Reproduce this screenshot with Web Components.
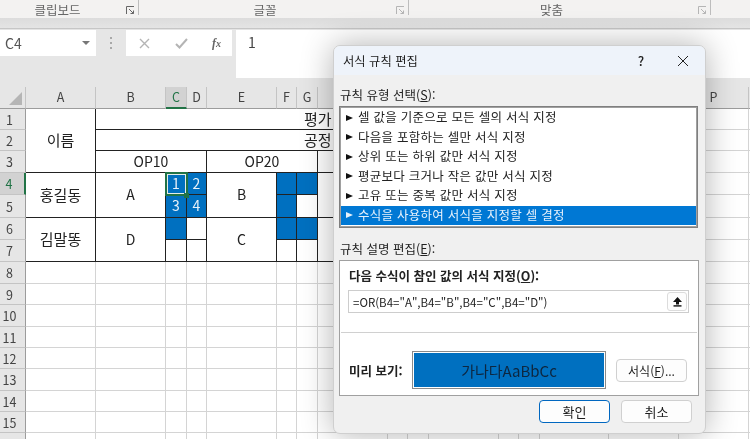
<!DOCTYPE html>
<html lang="ko">
<head>
<meta charset="utf-8">
<title>서식 규칙 편집</title>
<style>
    html, body {
        margin: 0;
        padding: 0;
        width: 750px;
        height: 439px;
        overflow: hidden;
        background: #fff;
        font-family: "Noto Sans CJK KR", "Noto Sans", sans-serif;
    }
</style>
</head>
<body>
<excel-app></excel-app>

<script>
const FONT = `"Noto Sans CJK KR", "Noto Sans", sans-serif`

class RibbonBar extends HTMLElement {
    constructor() {
        super()
        this.shadowDOM = this.attachShadow({mode: "open"})
    }

    connectedCallback() {
        const launcher = `<svg width="9" height="9" viewBox="0 0 9 9" fill="none" stroke="currentColor"><path d="M.5 8V.5H8"/><path d="M3 3l4.5 4.5M7.5 4.5v3h-3"/></svg>`
        const group = (width, shift, label, color) => `
            <div class="group" style="width:${width}px;padding-right:${shift}px;color:${color}">
                <span>${label}</span>${launcher}
            </div>`
        this.shadowDOM.innerHTML = `
            <style>
                :host {
                    display: block;
                    height: 30px;
                    background: #e4e4e4;
                    font-family: ${FONT};
                }
                .groups {
                    display: flex;
                    height: 18px;
                    background: #f3f2f1;
                    box-shadow: 0 1px 2px rgba(0,0,0,.12);
                }
                .group {
                    position: relative;
                    display: flex;
                    align-items: center;
                    justify-content: center;
                    box-sizing: border-box;
                    height: 15px;
                    border-right: 1px solid #bdbdbd;
                }
                .group span {
                    font-size: 12.5px;
                    line-height: 18px;
                    color: #666;
                    transform: translateY(2px);
                }
                .group svg {
                    position: absolute;
                    right: 3px;
                    top: 6px;
                }
                .strip {
                    height: 11px;
                    box-sizing: border-box;
                    border-bottom: 1px solid #c6c6c6;
                    background: linear-gradient(#dcdcdc, #e4e4e4);
                }
            </style>
            <div class="groups">
                ${group(139, 23, "클립보드", "#666")}
                ${group(270, 17, "글꼴", "#b5b5b5")}
                ${group(302, 16, "맞춤", "#b5b5b5")}
            </div>
            <div class="strip"></div>
        `
    }
}

class FormulaBar extends HTMLElement {
    constructor() {
        super()
        this.shadowDOM = this.attachShadow({mode: "open"})
    }

    connectedCallback() {
        this.shadowDOM.innerHTML = `
            <style>
                :host {
                    display: flex;
                    height: 57px;
                    background: #e6e6e6;
                    font-family: ${FONT};
                    color: #555;
                }
                .name {
                    display: flex;
                    align-items: center;
                    justify-content: space-between;
                    box-sizing: border-box;
                    width: 96px;
                    height: 26px;
                    padding: 0 5px;
                    background: #fff;
                    font-size: 14px;
                }
                .name i {
                    border: 4px solid transparent;
                    border-top: 4px solid #777;
                    border-bottom: 0;
                    margin-right: 1px;
                }
                .grip {
                    width: 30px;
                    display: flex;
                    height: 26px;
                    align-items: center;
                    justify-content: center;
                }
                .tools {
                    display: flex;
                    align-items: center;
                    justify-content: space-between;
                    box-sizing: border-box;
                    width: 106px;
                    height: 26px;
                    padding: 0 11px 0 13px;
                    background: #fff;
                    color: #b4b4b4;
                }
                .tools em {
                    font: italic bold 12px "Liberation Serif", serif;
                    color: #666;
                }
                .input {
                    flex: 1;
                    height: 48px;
                    margin-left: 4px;
                    padding: 2px 0 0 12px;
                    box-sizing: border-box;
                    background: #fff;
                    font-size: 14px;
                    line-height: 20px;
                    color: #444;
                }
            </style>
            <div class="name"><span>C4</span><i></i></div>
            <div class="grip">
                <svg width="3" height="12" fill="#a8a8a8"><rect y="0" width="2" height="2"/><rect y="5" width="2" height="2"/><rect y="10" width="2" height="2"/></svg>
            </div>
            <div class="tools">
                <svg width="11" height="11" fill="none" stroke="#b4b4b4" stroke-width="1.4"><path d="M1 1l9 9M10 1l-9 9"/></svg>
                <svg width="13" height="11" fill="none" stroke="#b4b4b4" stroke-width="2"><path d="M1 6l3.5 3.5L12 1"/></svg>
                <em>f<small>x</small></em>
            </div>
            <div class="input">1</div>
        `
    }
}

class SheetGrid extends HTMLElement {
    constructor() {
        super()
        this.shadowDOM = this.attachShadow({mode: "open"})
    }

    connectedCallback() {
        const widths = [26, 70, 70, 21, 20, 70, 20, 21, 70, 20, 21, 70, 20, 21, 69, 70, 70, 10]
        // H to O lie under the dialog, their letters are never seen
        const letters = ["A", "B", "C", "D", "E", "F", "G", "", "", "", "", "", "", "", "", "P", ""]
        const heights = [21, 21, 22, 22, 23, 22, 22, 22, 21, 22, 21, 21, 22, 21, 21, 21]
        const rowCount = heights.length
        const colCount = widths.length - 1
        const covered = new Set()
        const cells = []

        // c, r are 1 based sheet coordinates, header row and column come before them
        const cell = (c, r, cs, rs, cls, text, style) => {
            for (let y = r; y < r + rs; y++) {
                for (let x = c; x < c + cs; x++) covered.add(x + ":" + y)
            }
            cells.push(`<div class="cell ${cls}" style="grid-column:${c + 1} / span ${cs};grid-row:${r + 1} / span ${rs};${style || ""}">${text || ""}</div>`)
        }

        cell(1, 1, 1, 3, "b k", "이름")
        cell(2, 1, 13, 1, "bb far k", `<span>평가</span>`)
        cell(2, 2, 13, 1, "bb far k", `<span>공정</span>`)
        cell(2, 3, 3, 1, "b", "OP10")
        cell(5, 3, 3, 1, "b", "OP20")
        cell(1, 4, 1, 2, "b k", "홍길동")
        cell(2, 4, 1, 2, "b", "A")
        cell(1, 6, 1, 2, "b k", "김말똥")
        cell(2, 6, 1, 2, "b", "D")
        cell(3, 4, 1, 1, "b fill active", "1")
        cell(4, 4, 1, 1, "b fill", "2")
        cell(3, 5, 1, 1, "b fill", "3")
        cell(4, 5, 1, 1, "b fill", "4")
        cell(3, 6, 1, 1, "b fill")
        cell(4, 6, 1, 1, "b")
        cell(3, 7, 1, 1, "b")
        cell(4, 7, 1, 1, "b")
        cell(5, 4, 1, 2, "b", "B")
        cell(5, 6, 1, 2, "b", "C")
        cell(6, 4, 1, 1, "b fill")
        cell(7, 4, 1, 1, "b fill")
        cell(6, 5, 1, 1, "b fill")
        cell(7, 5, 1, 1, "b")
        cell(6, 6, 1, 1, "b fill")
        cell(7, 6, 1, 1, "b fill")
        cell(6, 7, 1, 1, "b")
        cell(7, 7, 1, 1, "b")

        // columns under the dialog carry the table on, O and P are plain sheet again
        for (let r = 1; r <= 7; r++) {
            for (let c = 8; c <= colCount; c++) {
                if (covered.has(c + ":" + r)) continue
                if (c > 14) cell(c, r, 1, 1, "")
                else cell(c, r, 1, 1, r % 2 ? "bb" : "nb")
            }
        }
        for (let r = 8; r <= rowCount; r++) {
            for (let c = 1; c <= colCount; c++) cell(c, r, 1, 1, "")
        }

        const colHeads = letters.map((l, i) =>
            `<div class="head col ${l === "C" ? "on" : ""}" style="grid-column:${i + 2};grid-row:1">${l}</div>`).join("")
        const rowHeads = heights.map((h, i) =>
            `<div class="head row ${i === 3 ? "on" : ""}" style="grid-column:1;grid-row:${i + 2}">${i < 15 ? i + 1 : ""}</div>`).join("")

        this.shadowDOM.innerHTML = `
            <style>
                :host {
                    display: block;
                    height: 352px;
                    overflow: hidden;
                    font-family: ${FONT};
                }
                .grid {
                    display: grid;
                    grid-template-columns: ${widths.map(w => w + "px").join(" ")};
                    grid-template-rows: 22px ${heights.map(h => h + "px").join(" ")};
                    background: #fff;
                }
                .head {
                    display: flex;
                    align-items: center;
                    justify-content: center;
                    box-sizing: border-box;
                    background: #e6e6e6;
                    color: #444;
                    font-size: 12.5px;
                }
                .col {
                    padding-bottom: 2px;
                    border-right: 1px solid #c4c4c4;
                    border-bottom: 1px solid #9c9c9c;
                }
                .col.on {
                    background: #d2d2d2;
                    color: #217346;
                    border-bottom: 2px solid #217346;
                }
                .row {
                    padding-right: 6px;
                    border-right: 1px solid #9c9c9c;
                    border-bottom: 1px solid #c4c4c4;
                }
                .row.on {
                    background: #d2d2d2;
                    color: #217346;
                    border-right: 2px solid #217346;
                }
                .corner {
                    grid-column: 1;
                    grid-row: 1;
                    position: relative;
                    background: #e6e6e6;
                    border-right: 1px solid #c4c4c4;
                    border-bottom: 1px solid #9c9c9c;
                    box-sizing: border-box;
                }
                .corner::after {
                    content: "";
                    position: absolute;
                    right: 3px;
                    bottom: 3px;
                    border-left: 13px solid transparent;
                    border-bottom: 13px solid #b5b5b5;
                }
                .cell {
                    display: flex;
                    align-items: center;
                    justify-content: center;
                    box-sizing: border-box;
                    min-width: 0;
                    overflow: hidden;
                    padding-bottom: 2px;
                    border-right: 1px solid #d4d4d4;
                    border-bottom: 1px solid #d4d4d4;
                    font-size: 14px;
                    color: #222;
                    white-space: nowrap;
                }
                .k {
                    font-size: 15px;
                }
                .b {
                    border-right: 1px solid #222;
                    border-bottom: 1px solid #222;
                }
                .bb {
                    border-bottom: 1px solid #222;
                }
                .nb {
                    border-bottom: 0;
                }
                .far {
                    justify-content: flex-start;
                    padding-left: 208px;
                }
                .fill {
                    background: #0070c0;
                    color: #e8f1f8;
                }
                .active {
                    position: relative;
                    overflow: visible;
                    z-index: 2;
                }
                .active::before {
                    content: "";
                    position: absolute;
                    left: -1px;
                    top: -1px;
                    right: -2px;
                    bottom: -2px;
                    border: 2px solid #217346;
                    box-shadow: inset 0 0 0 1px #e4ece8;
                }
                .active::after {
                    content: "";
                    position: absolute;
                    right: -3px;
                    bottom: -4px;
                    width: 5px;
                    height: 5px;
                    background: #217346;
                }
            </style>
            <div class="grid">
                <div class="corner"></div>
                ${colHeads}
                ${rowHeads}
                ${cells.join("")}
            </div>
        `
    }
}

class DialogButton extends HTMLElement {
    constructor() {
        super()
        this.shadowDOM = this.attachShadow({mode: "open"})
    }

    connectedCallback() {
        this.shadowDOM.innerHTML = `
            <style>
                :host {
                    display: flex;
                    align-items: center;
                    justify-content: center;
                    box-sizing: border-box;
                    width: 71px;
                    height: 23px;
                    background: #fdfdfd;
                    border: 1px solid #d0d0d0;
                    border-radius: 4px;
                    font-size: 12px;
                    color: #1c1c1c;
                }
                :host([primary]) {
                    border: 1px solid #0067c0;
                }
                :host([wide]) {
                    font-size: 13px;
                }
            </style>
            <slot></slot>
        `
    }
}

class RuleList extends HTMLElement {
    constructor() {
        super()
        this.shadowDOM = this.attachShadow({mode: "open"})
    }

    connectedCallback() {
        const rules = [
            "셀 값을 기준으로 모든 셀의 서식 지정",
            "다음을 포함하는 셀만 서식 지정",
            "상위 또는 하위 값만 서식 지정",
            "평균보다 크거나 작은 값만 서식 지정",
            "고유 또는 중복 값만 서식 지정",
            "수식을 사용하여 서식을 지정할 셀 결정"
        ]
        this.shadowDOM.innerHTML = `
            <style>
                :host {
                    display: block;
                    box-sizing: border-box;
                    height: 122px;
                    padding: 1px;
                    background: #fff;
                    border: 1px solid #7f7f7f;
                    outline: 1px solid #a0a0a0;
                    outline-offset: -2px;
                }
                .rule {
                    display: flex;
                    align-items: center;
                    box-sizing: border-box;
                    height: 19.5px;
                    padding: 0 0 2px 5px;
                    font-size: 12.5px;
                    letter-spacing: .25px;
                    color: #222;
                    white-space: nowrap;
                }
                .rule i {
                    width: 0;
                    height: 0;
                    margin: 2px 5px 0 0;
                    border-left: 7px solid #111;
                    border-top: 3.5px solid transparent;
                    border-bottom: 3.5px solid transparent;
                }
                .sel {
                    background: #0078d4;
                    color: #e6f1fb;
                }
                .sel i {
                    border-left-color: #e6f1fb;
                }
            </style>
            ${rules.map((r, i) => `<div class="rule ${i === 5 ? "sel" : ""}"><i></i><span>${r}</span></div>`).join("")}
        `
    }
}

class RuleDialog extends HTMLElement {
    constructor() {
        super()
        this.shadowDOM = this.attachShadow({mode: "open"})
    }

    connectedCallback() {
        this.shadowDOM.innerHTML = `
            <style>
                * {
                    box-sizing: border-box;
                }
                :host {
                    position: absolute;
                    left: 333px;
                    top: 45px;
                    width: 371px;
                    height: 387px;
                    display: flex;
                    flex-direction: column;
                    background: #f0f0f0;
                    border: 1px solid #cfcfcf;
                    border-radius: 7px;
                    box-shadow: 0 0 32px rgba(0,0,0,.3);
                    font-family: ${FONT};
                    color: #222;
                    overflow: hidden;
                }
                .title {
                    display: flex;
                    align-items: center;
                    height: 29px;
                    padding-left: 9px;
                    background: #eef3fa;
                    font-size: 12.3px;
                }
                .title span {
                    flex: 1;
                }
                .help {
                    width: 20px;
                    margin-right: 26px;
                    text-align: center;
                    font-size: 13px;
                    font-weight: 500;
                }
                .close {
                    margin-right: 16px;
                    display: block;
                }
                .body {
                    flex: 1;
                    display: flex;
                    flex-direction: column;
                    padding: 11px 5px 0 5px;
                }
                .label {
                    font-size: 12.5px;
                    line-height: 18px;
                    margin: 0 0 2px 1px;
                    white-space: nowrap;
                }
                rule-list {
                    width: 359px;
                }
                .label.second {
                    margin-top: 12px;
                }
                .panel {
                    width: 360px;
                    height: 136px;
                    display: flex;
                    flex-direction: column;
                    background: #fff;
                    border: 1px solid #a0a0a0;
                    padding: 0 1px;
                }
                .panel b {
                    font-size: 12.5px;
                    font-weight: 700;
                    white-space: nowrap;
                }
                .head {
                    padding: 6px 0 0 8px;
                    line-height: 18px;
                    height: 29px;
                    display: block;
                }
                .formula {
                    display: flex;
                    align-items: center;
                    justify-content: space-between;
                    margin-left: 7px;
                    width: 341px;
                    height: 23px;
                    padding: 0 1px 0 4px;
                    border: 1px solid #cdcdcd;
                    font-size: 11.5px;
                    white-space: nowrap;
                }
                .up {
                    display: flex;
                    align-items: center;
                    justify-content: center;
                    width: 20px;
                    height: 19px;
                    background: #fdfdfd;
                    border: 1px solid #dcdcdc;
                    border-radius: 3px;
                }
                hr {
                    width: 100%;
                    height: 1px;
                    margin: 19px 0 0 0;
                    border: 0;
                    background: #d0d0d0;
                }
                .preview {
                    display: flex;
                    align-items: center;
                    margin-top: 18px;
                    padding-left: 8px;
                }
                .preview b {
                    width: 63px;
                }
                .sample {
                    display: flex;
                    align-items: center;
                    justify-content: center;
                    width: 194px;
                    height: 38px;
                    margin-right: 10px;
                    padding: 0;
                    background: #0070c0;
                    border: 2px solid #fff;
                    outline: 1px solid #8a8a8a;
                    outline-offset: -1px;
                    font-size: 15px;
                    color: #0d2740;
                    white-space: nowrap;
                }
                .foot {
                    display: flex;
                    gap: 11px;
                    justify-content: flex-end;
                    margin-top: 4px;
                    padding-right: 8px;
                }
                u {
                    text-underline-offset: 1px;
                }
            </style>
            <div class="title">
                <span>서식 규칙 편집</span>
                <div class="help">?</div>
                <svg class="close" width="12" height="12" fill="none" stroke="#222" stroke-width="1"><path d="M1 1l10 10M11 1L1 11"/></svg>
            </div>
            <div class="body">
                <div class="label">규칙 유형 선택(<u>S</u>):</div>
                <rule-list></rule-list>
                <div class="label second">규칙 설명 편집(<u>E</u>):</div>
                <div class="panel">
                    <b class="head">다음 수식이 참인 값의 서식 지정(<u>O</u>):</b>
                    <div class="formula">
                        <span>=OR(B4="A",B4="B",B4="C",B4="D")</span>
                        <div class="up">
                            <svg width="11" height="11" fill="#111"><path d="M5.5 1L10 6H7v2.5H4V6H1z"/><rect x="1.5" y="9.2" width="8" height="1.4"/></svg>
                        </div>
                    </div>
                    <hr>
                    <div class="preview">
                        <b>미리 보기:</b>
                        <div class="sample">가나다AaBbCc</div>
                        <dialog-button>서식(<u>F</u>)...</dialog-button>
                    </div>
                </div>
                <div class="foot">
                    <dialog-button primary wide>확인</dialog-button>
                    <dialog-button wide>취소</dialog-button>
                </div>
            </div>
        `
    }
}

class ExcelApp extends HTMLElement {
    constructor() {
        super()
        this.shadowDOM = this.attachShadow({mode: "open"})
    }

    connectedCallback() {
        this.shadowDOM.innerHTML = `
            <style>
                :host {
                    display: block;
                    position: relative;
                    width: 750px;
                    height: 439px;
                    overflow: hidden;
                    filter: blur(.3px);
                }
            </style>
            <ribbon-bar></ribbon-bar>
            <formula-bar></formula-bar>
            <sheet-grid></sheet-grid>
            <rule-dialog></rule-dialog>
        `
    }
}

customElements.define("ribbon-bar", RibbonBar)
customElements.define("formula-bar", FormulaBar)
customElements.define("sheet-grid", SheetGrid)
customElements.define("dialog-button", DialogButton)
customElements.define("rule-list", RuleList)
customElements.define("rule-dialog", RuleDialog)
customElements.define("excel-app", ExcelApp)
</script>
</body>
</html>
